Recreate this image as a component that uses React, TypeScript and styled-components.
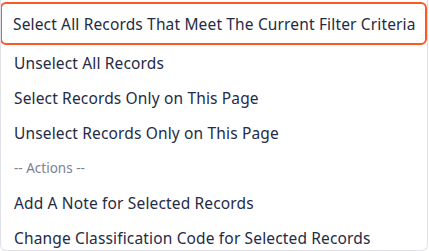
import { createGlobalStyle, styled } from 'styled-components';

const GlobalStyle = createGlobalStyle`
  body {
    margin: 0;
    background: #ffffff;
    font-family: 'Noto Sans', 'Liberation Sans', sans-serif;
  }
`;

interface MenuOption {
  label: string;
  header?: boolean;
  active?: boolean;
}

const options: MenuOption[] = [
  { label: 'Select All Records That Meet The Current Filter Criteria', active: true },
  { label: 'Unselect All Records' },
  { label: 'Select Records Only on This Page' },
  { label: 'Unselect Records Only on This Page' },
  { label: '-- Actions --', header: true },
  { label: 'Add A Note for Selected Records' },
  { label: 'Change Classification Code for Selected Records' },
];

const App = () => {
  return (
    <>
      <GlobalStyle />
      <MenuContainer>
        {options.map((option) =>
          option.header ? (
            <GroupHeader key={option.label}>{option.label}</GroupHeader>
          ) : (
            <MenuItem key={option.label} $active={option.active}>
              {option.label}
            </MenuItem>
          ),
        )}
      </MenuContainer>
    </>
  );
};

export default App;

const MenuContainer = styled.div`
  display: flex;
  flex-direction: column;
  width: 428px;
  height: 251px;
  padding-top: 2px;
  box-sizing: border-box;
  border: 1px solid #e2e0e8;
  border-top: none;
  border-radius: 0 0 6px 6px;
  overflow: hidden;
`;

const MenuItem = styled.div<{ $active?: boolean }>`
  display: flex;
  flex-shrink: 0;
  align-items: center;
  height: ${({ $active }) => ($active ? '43px' : '35px')};
  padding: 0 11px;
  margin: ${({ $active }) => ($active ? '0 0 0 -1px' : '0')};
  box-sizing: border-box;
  border: 2px solid ${({ $active }) => ($active ? '#ff5722' : 'transparent')};
  border-radius: 6px;
  font-size: 15.5px;
  letter-spacing: 0.15px;
  color: #242b45;
  white-space: nowrap;
  cursor: pointer;
`;

const GroupHeader = styled.div`
  display: flex;
  flex-shrink: 0;
  align-items: center;
  height: 35px;
  padding: 0 13px;
  font-size: 13.5px;
  color: #7c8195;
  white-space: nowrap;
`;
